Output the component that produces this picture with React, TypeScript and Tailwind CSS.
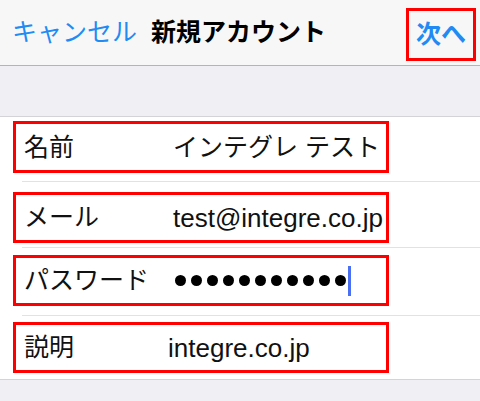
import type { ReactNode } from "react";

const font = { fontFamily: '"Liberation Sans", "Noto Sans CJK JP", sans-serif' };

type Row = {
  label: string;
  value: ReactNode;
  rowClass: string;
  boxClass: string;
  valueClass: string;
  last?: boolean;
};

function PasswordDots({ count }: { count: number }) {
  return (
    <div className="flex items-center">
      <div className="flex items-center gap-[5px]">
        {Array.from({ length: count }).map((_, i) => (
          <span key={i} className="block w-[11px] h-[11px] rounded-full bg-black" />
        ))}
      </div>
      <span className="block ml-[2px] w-[3px] h-[30px] bg-[#4a6ff2]" />
    </div>
  );
}

// the red boxes are hand drawn, so each row gets its own offsets
const rows: Row[] = [
  { label: "名前", value: "インテグレ テスト", rowClass: "pt-[4px] pb-[8px]", boxClass: "h-[52px]", valueClass: "" },
  { label: "メール", value: "test@integre.co.jp", rowClass: "pt-[10px] pb-[4px]", boxClass: "h-[51px]", valueClass: "text-[26px]" },
  { label: "パスワード", value: <PasswordDots count={11} />, rowClass: "pt-[7px] pb-[9px]", boxClass: "h-[51px]", valueClass: "ml-[2px]" },
  { label: "説明", value: "integre.co.jp", rowClass: "pt-[6px] pb-[6px]", boxClass: "h-[51px]", valueClass: "-ml-[5px] text-[26px]", last: true },
];

export default function App() {
  return (
    <div className="w-[480px] h-[401px] overflow-hidden bg-[#efeff4] text-[#111]" style={font}>
      {/* nav bar */}
      <div className="h-[66px] flex items-center bg-[#f7f7f8] border-b border-[#b4b4b8]">
        <span className="ml-[12px] text-[25px] text-[#218bf3] leading-none">キャンセル</span>
        <span className="ml-[14px] text-[25px] font-bold leading-none text-black">新規アカウント</span>
        <div className="ml-auto mr-[4px] mt-[3px] w-[70px] h-[53px] border-[3px] border-[#ff0000] flex items-center justify-center">
          <span className="text-[25px] font-bold text-[#218bf3] leading-none">次へ</span>
        </div>
      </div>

      <div className="h-[51px] border-b border-[#d4d4d8]" />

      {/* form */}
      <div className="bg-white border-b border-[#d4d4d8]">
        {rows.map((r) => (
          <div key={r.label}>
            <div className={r.rowClass}>
              <div className={`ml-[13px] w-[376px] border-[3px] border-[#ff0000] flex items-center text-[25px] leading-none ${r.boxClass}`}>
                <span className="w-[157px] pl-[8px] shrink-0">{r.label}</span>
                <div className={r.valueClass}>{r.value}</div>
              </div>
            </div>
            {!r.last && <div className="ml-[22px] h-px bg-[#e2e2e4]" />}
          </div>
        ))}
      </div>
    </div>
  );
}
